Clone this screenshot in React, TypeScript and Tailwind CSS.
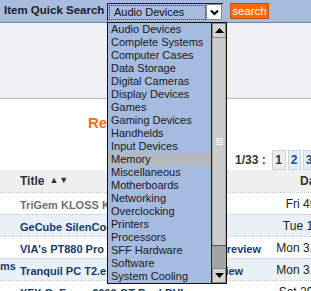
import React from "react";

const categories = [
  "Audio Devices",
  "Complete Systems",
  "Computer Cases",
  "Data Storage",
  "Digital Cameras",
  "Display Devices",
  "Games",
  "Gaming Devices",
  "Handhelds",
  "Input Devices",
  "Memory",
  "Miscellaneous",
  "Motherboards",
  "Networking",
  "Overclocking",
  "Printers",
  "Processors",
  "SFF Hardware",
  "Software",
  "System Cooling",
];

const rows = [
  { pre: "", title: "TriGem KLOSS KL3 Barebone", date: "Fri 4th Jun 2004", muted: true },
  { pre: "", title: "GeCube SilenCool Radeon 9600", date: "Tue 1st Jun 2004" },
  { pre: "", title: "VIA's PT880 Pro and K8T890 Pro board review", date: "Mon 31st May 2004" },
  { pre: "ms", title: "Tranquil PC T2.e Barebone System Review", date: "Mon 31st May 2004" },
  { pre: "", title: "XFX GeForce 6600 GT Dual DVI", date: "Sat 29th May 2004" },
];

const Arrow: React.FC<{ up?: boolean }> = ({ up }) => (
  <svg width="9" height="5" viewBox="0 0 9 5" className={up ? "" : "rotate-180"}>
    <path d="M0 5 L4.5 0 L9 5 Z" fill="#000" />
  </svg>
);

const App: React.FC = () => {
  return (
    <div className="relative w-[311px] h-[291px] overflow-hidden bg-white font-['Liberation_Sans',Arial,sans-serif]">
      {/* quick search bar */}
      <div className="h-[23px] bg-[#a7bbdd] border-b border-[#6d86b2] flex items-center">
        <span className="ml-[4px] w-[103px] shrink-0 text-[11.5px] font-bold text-[#1c1c2c] whitespace-nowrap">
          Item Quick Search
        </span>
        <div className="w-[116px] shrink-0 h-[18px] border-l border-t border-[#222] bg-[#a7bbdd] flex items-center p-[1px] mt-[1px]">
          <div className="flex-1 h-full border border-dotted border-[#333] flex items-center pl-[4px] text-[11px] text-[#111] whitespace-nowrap">
            Audio Devices
          </div>
          <div className="w-[16px] h-[16px] bg-white border border-[#888] flex items-center justify-center">
            <svg width="9" height="7" viewBox="0 0 9 7">
              <path d="M1 1.5 L4.5 5 L8 1.5" stroke="#000" strokeWidth="2" fill="none" />
            </svg>
          </div>
        </div>
        <button className="ml-[7px] h-[16px] w-[39px] bg-[#ff6a00] border border-[#c85200] text-white text-[11.5px] leading-[14px]">
          search
        </button>
      </div>

      {/* grey band */}
      <div className="h-[76px] bg-[#eef0f3] border-b border-[#b8b8b8]" />

      {/* heading + pagination */}
      <div className="h-[71px] relative">
        <div className="pl-[88px] pt-[13px] text-[15px] font-bold text-[#f07020] whitespace-nowrap">
          Recent Reviews
        </div>
        <div className="absolute left-[235px] top-[51px] flex items-center whitespace-nowrap text-[12px] font-bold text-[#333]">
          <span>1/33 :</span>
          <span className="ml-[6px] w-[14px] h-[20px] bg-[#eeeeee] border border-[#cfcfcf] flex items-center justify-center">1</span>
          <span className="ml-[2px] w-[13px] h-[20px] bg-[#e6eef8] border border-[#c8d4e6] flex items-center justify-center text-[#1f4f8f]">2</span>
          <span className="ml-[2px] w-[13px] h-[20px] bg-[#e6eef8] border border-[#c8d4e6] flex items-center justify-center text-[#1f4f8f]">3</span>
        </div>
      </div>

      {/* table header */}
      <div className="h-[22px] bg-[#efefef] flex items-center text-[12px] font-bold text-[#333] whitespace-nowrap">
        <div className="w-[270px] shrink-0 pl-[20px] flex items-center gap-[5px]">
          Title <span className="text-[9px] tracking-[1px]">▲▼</span>
        </div>
        <div className="shrink-0 pl-[30px]">Date Posted</div>
      </div>

      {/* rows */}
      {rows.map((r, i) => (
        <div
          key={i}
          className={`h-[22px] flex items-center border-t border-dotted border-[#c4c4c4] ${i % 2 === 1 ? "bg-[#eaf0f8]" : "bg-white"}`}
        >
          <div className="w-[270px] shrink-0 relative pl-[20px] whitespace-nowrap overflow-hidden">
            {r.pre && (
              <span className="absolute left-0 text-[11px] font-bold text-[#1b3d6c]">{r.pre}</span>
            )}
            <span className={`text-[11px] font-bold ${r.muted ? "text-[#707070]" : "text-[#173a6a]"}`}>
              {r.title}
            </span>
          </div>
          <div className="w-[118px] shrink-0 text-center whitespace-nowrap text-[12px] text-[#222]">{r.date}</div>
        </div>
      ))}

      {/* open dropdown list */}
      <div className="absolute left-[107px] top-[22px] w-[120px] h-[262px] border border-[#111] bg-[#a5bbe0] flex">
        <div className="flex-1 flex flex-col">
          {categories.map((c) => (
            <div
              key={c}
              className={`h-[13px] leading-[13px] pl-[3px] text-[11px] text-[#1a1a1a] whitespace-nowrap ${c === "Memory" ? "bg-[#b6b8be]" : ""}`}
            >
              {c}
            </div>
          ))}
        </div>
        <div className="w-[15px] shrink-0 flex flex-col border-l border-[#222]">
          <div className="h-[15px] bg-[#d4d4d4] border border-[#888] flex items-center justify-center">
            <Arrow up />
          </div>
          <div className="h-[207px] bg-[#cbcbcb] border-x border-[#aaa] flex items-center justify-center">
            <div className="flex flex-col gap-[1px]">
              <div className="w-[7px] h-[1px] bg-[#f4f4f4]" />
              <div className="w-[7px] h-[1px] bg-[#f4f4f4]" />
              <div className="w-[7px] h-[1px] bg-[#f4f4f4]" />
              <div className="w-[7px] h-[1px] bg-[#f4f4f4]" />
            </div>
          </div>
          <div className="flex-1 bg-[#a4a4a4] border-t border-[#555]" />
          <div className="h-[15px] bg-[#d4d4d4] border border-[#888] flex items-center justify-center">
            <Arrow />
          </div>
        </div>
      </div>
    </div>
  );
};

export default App;
